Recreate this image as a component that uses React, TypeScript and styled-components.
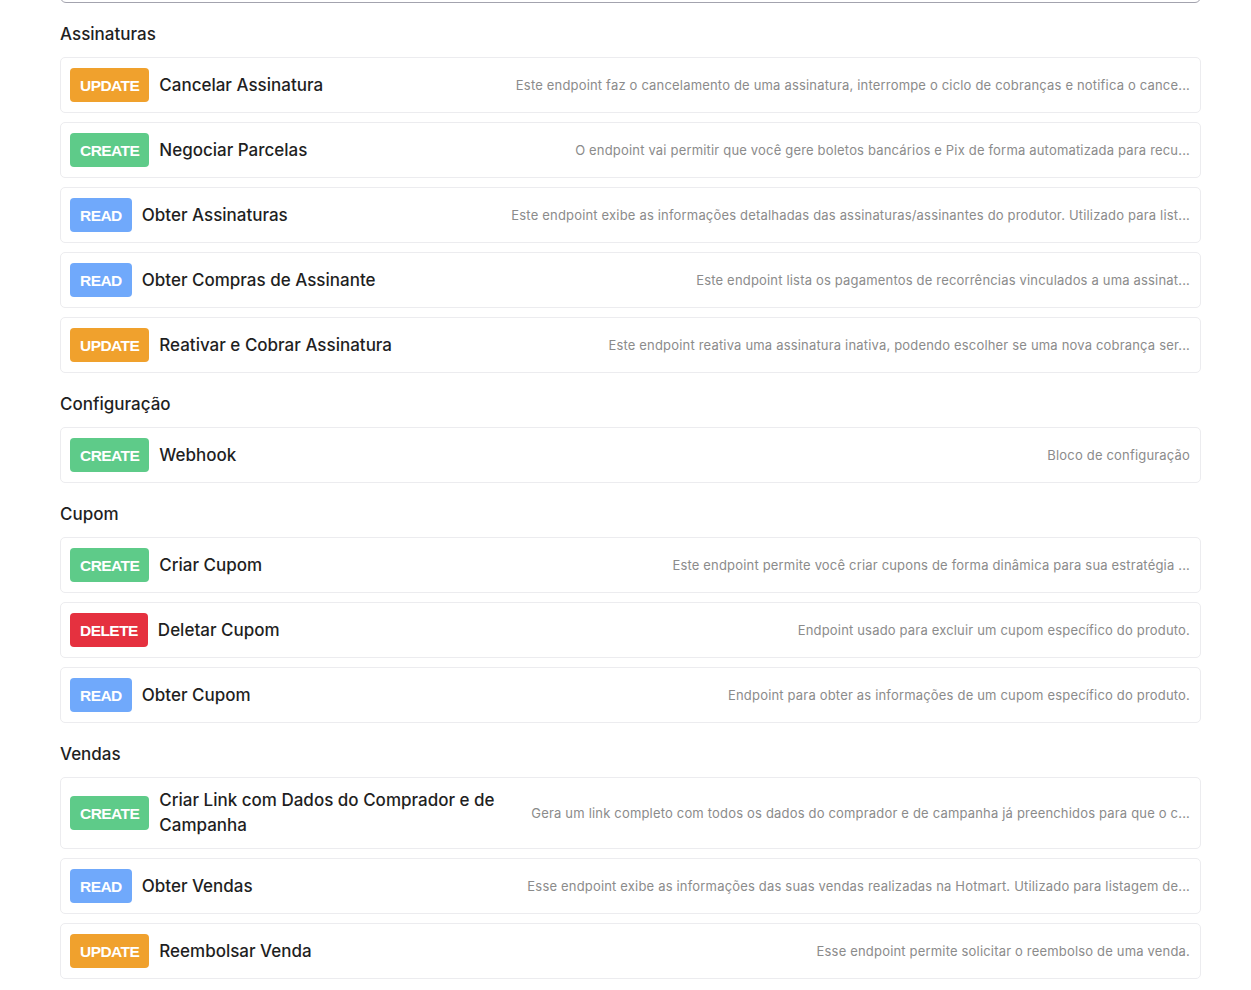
import React from 'react';
import styled, { createGlobalStyle } from 'styled-components';

type Method = 'CREATE' | 'READ' | 'UPDATE' | 'DELETE';

interface Endpoint {
  method: Method;
  title: string;
  description: string;
}

interface Section {
  name: string;
  endpoints: Endpoint[];
}

const METHOD_COLORS: Record<Method, string> = {
  CREATE: '#5ecb89',
  READ: '#70a9fb',
  UPDATE: '#f0a12d',
  DELETE: '#e5313f',
};

const SECTIONS: Section[] = [
  {
    name: 'Assinaturas',
    endpoints: [
      {
        method: 'UPDATE',
        title: 'Cancelar Assinatura',
        description:
          'Este endpoint faz o cancelamento de uma assinatura, interrompe o ciclo de cobranças e notifica o cance...',
      },
      {
        method: 'CREATE',
        title: 'Negociar Parcelas',
        description:
          'O endpoint vai permitir que você gere boletos bancários e Pix de forma automatizada para recu...',
      },
      {
        method: 'READ',
        title: 'Obter Assinaturas',
        description:
          'Este endpoint exibe as informações detalhadas das assinaturas/assinantes do produtor. Utilizado para list...',
      },
      {
        method: 'READ',
        title: 'Obter Compras de Assinante',
        description: 'Este endpoint lista os pagamentos de recorrências vinculados a uma assinat...',
      },
      {
        method: 'UPDATE',
        title: 'Reativar e Cobrar Assinatura',
        description: 'Este endpoint reativa uma assinatura inativa, podendo escolher se uma nova cobrança ser...',
      },
    ],
  },
  {
    name: 'Configuração',
    endpoints: [{ method: 'CREATE', title: 'Webhook', description: 'Bloco de configuração' }],
  },
  {
    name: 'Cupom',
    endpoints: [
      {
        method: 'CREATE',
        title: 'Criar Cupom',
        description: 'Este endpoint permite você criar cupons de forma dinâmica para sua estratégia ...',
      },
      {
        method: 'DELETE',
        title: 'Deletar Cupom',
        description: 'Endpoint usado para excluir um cupom específico do produto.',
      },
      {
        method: 'READ',
        title: 'Obter Cupom',
        description: 'Endpoint para obter as informações de um cupom específico do produto.',
      },
    ],
  },
  {
    name: 'Vendas',
    endpoints: [
      {
        method: 'CREATE',
        title: 'Criar Link com Dados do Comprador e de Campanha',
        description:
          'Gera um link completo com todos os dados do comprador e de campanha já preenchidos para que o c...',
      },
      {
        method: 'READ',
        title: 'Obter Vendas',
        description:
          'Esse endpoint exibe as informações das suas vendas realizadas na Hotmart. Utilizado para listagem de...',
      },
      {
        method: 'UPDATE',
        title: 'Reembolsar Venda',
        description: 'Esse endpoint permite solicitar o reembolso de uma venda.',
      },
    ],
  },
];

const GlobalStyle = createGlobalStyle`
  html, body {
    margin: 0;
    padding: 0;
    background: #ffffff;
  }
  body {
    font-family: Inter, "Noto Sans", "Liberation Sans", sans-serif;
    color: #1f1f1f;
    overflow: hidden;
  }
`;

const Page = styled.main`
  padding: 0 50px 0 60px;
`;

// search field above the list, scrolled mostly out of view
const SearchBox = styled.div`
  height: 40px;
  margin-top: -37px;
  border: 1px solid #a3a3ae;
  border-radius: 6px;
  box-sizing: border-box;
`;

const SectionTitle = styled.h2`
  margin: 19px 0 11px;
  font-size: 17px;
  line-height: 24px;
  font-weight: 500;
  color: #1f1f1f;
`;

const List = styled.div`
  display: flex;
  flex-direction: column;
  gap: 9px;
`;

const Card = styled.div`
  display: flex;
  align-items: center;
  gap: 10px;
  padding: 10px 10px 10px 9px;
  border: 1px solid #ececef;
  border-radius: 5px;
  background: #fff;
  min-height: 34px;
`;

const Badge = styled.span<{ $method: Method }>`
  flex: none;
  height: 34px;
  box-sizing: border-box;
  padding: 1px 10px 0 10px;
  display: inline-flex;
  align-items: center;
  border-radius: 4px;
  background: ${(p) => METHOD_COLORS[p.$method]};
  color: #fff;
  font-family: "Liberation Sans", Arial, sans-serif;
  font-weight: 700;
  font-size: 15.5px;
  letter-spacing: -0.55px;
`;

const Title = styled.span`
  flex: none;
  max-width: 340px;
  font-size: 17px;
  line-height: 25px;
  font-weight: 500;
  color: #1f1f1f;
`;

const Description = styled.span`
  flex: 1;
  min-width: 0;
  margin-left: 14px;
  text-align: right;
  white-space: nowrap;
  overflow: hidden;
  font-size: 13px;
  color: #8b8b8b;
  letter-spacing: 0.18px;
`;

const EndpointRow: React.FC<{ endpoint: Endpoint }> = ({ endpoint }) => (
  <Card>
    <Badge $method={endpoint.method}>{endpoint.method}</Badge>
    <Title>{endpoint.title}</Title>
    <Description>{endpoint.description}</Description>
  </Card>
);

export default function App() {
  return (
    <>
      <GlobalStyle />
      <Page>
        <SearchBox />
        {SECTIONS.map((section) => (
          <section key={section.name}>
            <SectionTitle>{section.name}</SectionTitle>
            <List>
              {section.endpoints.map((ep) => (
                <EndpointRow key={ep.title} endpoint={ep} />
              ))}
            </List>
          </section>
        ))}
      </Page>
    </>
  );
}
